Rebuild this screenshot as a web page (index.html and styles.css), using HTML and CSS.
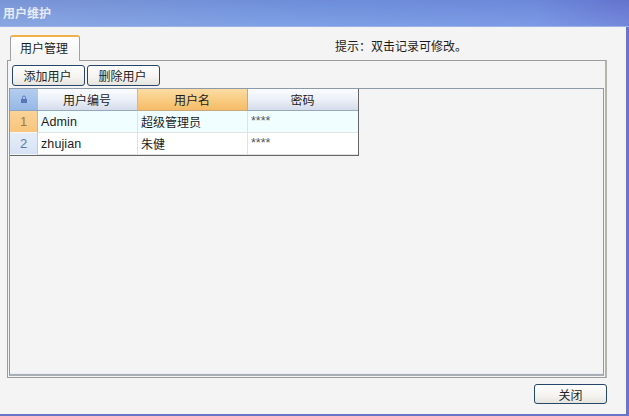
FILE: index.html
```html
<!DOCTYPE html>
<html lang="zh">
<head>
<meta charset="utf-8">
<title>用户维护</title>
<link rel="stylesheet" href="styles.css">
</head>
<body>
<div class="window">
  <div class="titlebar">用户维护</div>
  <div class="content">
    <div class="tabstrip">
      <div class="tab">用户管理</div>
      <div class="hint">提示：双击记录可修改。</div>
    </div>
    <div class="panel">
      <div class="toolbar">
        <button class="btn">添加用户</button>
        <button class="btn">删除用户</button>
      </div>
      <div class="gridbox">
        <div class="grid">
          <div class="corner">
            <svg width="8" height="9" viewBox="0 0 8 9"><path d="M2.5 4V2.5a1.5 1.5 0 0 1 3 0V4" fill="none" stroke="#5a76b8" stroke-width="1"/><rect x="1" y="4" width="6" height="4" fill="#5a76b8"/></svg>
          </div>
          <div class="head">用户编号</div>
          <div class="head sorted">用户名</div>
          <div class="head">密码</div>

          <div class="rowhead current">1</div>
          <div class="cell alt latin">Admin</div>
          <div class="cell alt">超级管理员</div>
          <div class="cell alt stars">****</div>

          <div class="rowhead">2</div>
          <div class="cell latin">zhujian</div>
          <div class="cell">朱健</div>
          <div class="cell stars">****</div>
        </div>
      </div>
    </div>
    <div class="footer">
      <button class="btn close">关闭</button>
    </div>
  </div>
</div>
</body>
</html>
```
FILE: styles.css
```css
* { box-sizing: border-box; }
html, body { margin: 0; padding: 0; }
body {
  width: 629px;
  height: 416px;
  overflow: hidden;
  background: #f4f4f4;
  font-family: "Noto Sans CJK SC", "Liberation Sans", sans-serif;
  font-size: 12px;
  color: #1c1c1c;
}
.window {
  width: 629px;
  height: 416px;
  display: flex;
  flex-direction: column;
  border-right: 3px solid #6a75c8;
  border-bottom: 2px solid #6a75c8;
  background: #f4f4f4;
}
.titlebar {
  height: 27px;
  flex: none;
  margin-right: -3px;
  padding-left: 3px;
  line-height: 26px;
  font-size: 12px;
  font-weight: 700;
  color: #e6ecf8;
  background:
    linear-gradient(rgba(60, 90, 190, .16), rgba(150, 190, 255, .22)),
    linear-gradient(90deg, #86a0da 0%, #7797de 50%, #7590de 85%, #6a78d0 100%);
  border-bottom: 1px solid #9ab2e8;
}
.content {
  flex: 1;
  display: flex;
  flex-direction: column;
  padding: 8px 19px 0 7px;
  min-height: 0;
}
.tabstrip {
  height: 26px;
  flex: none;
  display: flex;
  position: relative;
  z-index: 1;
}
.tab {
  width: 70px;
  height: 26px;
  margin-left: 3px;
  padding-right: 2px;
  text-align: center;
  line-height: 22px;
  background: linear-gradient(#fff, #f6f6f6 70%, #f4f4f4);
  border: 1px solid #a0a0a0;
  border-top: 2px solid #f2b04a;
  border-bottom: none;
  border-radius: 3px 3px 0 0;
}
.hint {
  margin-left: 255px;
  padding-top: 1px;
  line-height: 20px;
}
.panel {
  height: 318px;
  flex: none;
  margin-top: -1px;
  padding: 4px 1px 1px 1px;
  border: 1px solid #9c9c9c;
  border-right: 2px solid #b4b4ac;
  display: flex;
  flex-direction: column;
  background: #f4f4f4;
}
.toolbar {
  display: flex;
  gap: 2px;
  padding-left: 3px;
  height: 23px;
  flex: none;
}
.btn {
  width: 73px;
  height: 21px;
  padding: 0 2px 0 0;
  font: inherit;
  color: #222;
  border: 1px solid #26466a;
  border-radius: 3px;
  background: linear-gradient(#fefefe, #f4f3ef 60%, #e6e4de);
}
.gridbox {
  flex: 1;
  border: 1px solid #8c9aa8;
  border-bottom: 2px solid #a8aeb4;
  box-shadow: inset 0 -1px 0 #e8ecf8;
  min-height: 0;
}
.grid {
  width: 349px;
  display: grid;
  grid-template-columns: 28px 100px 110px 110px;
  grid-template-rows: 22px 22px 22px;
  border-right: 1px solid #666;
  border-bottom: 1px solid #666;
  height: 67px;
}
.corner {
  display: flex;
  align-items: center;
  justify-content: center;
  background: linear-gradient(#b4cdef, #96b8e6);
  border-bottom: 1px solid #8ea4c4;
}
.head {
  padding-right: 1px;
  text-align: center;
  line-height: 21px;
  background: linear-gradient(#fafcff, #eef2f9 45%, #d5dcea);
  border-right: 1px solid #b4bccc;
  border-bottom: 1px solid #98a8bc;
}
.head:nth-child(4) { border-right: none; }
.head.sorted {
  background: linear-gradient(#fcdca4, #f9cb80 55%, #f5bc68);
  border-right-color: #d8a860;
  border-bottom-color: #c8a878;
}
.rowhead {
  text-align: center;
  line-height: 21px;
  color: #5c7ba8;
  font-family: "Liberation Sans", sans-serif;
  font-size: 13px;
  background: linear-gradient(#e6edf8, #d6e2f4);
  border-bottom: 1px solid #f4f6fa;
  border-right: 1px solid #c0cce0;
}
.rowhead.current {
  color: #9a7a50;
  background: linear-gradient(#fbd298, #f8c67c);
  border-right-color: #dcb070;
}
.cell {
  padding: 1px 0 0 3px;
  line-height: 20px;
  background: #fff;
  border-right: 1px solid #dfe3e3;
  border-bottom: 1px solid #dfe3e3;
  white-space: nowrap;
  font-size: 12px;
}
.cell:nth-child(4n) { border-right: none; }
.cell.alt { background: #f0feff; }
.cell.latin {
  font-family: "Liberation Sans", sans-serif;
  font-size: 12.5px;
  letter-spacing: .1px;
}
.cell.stars {
  color: #555;
  font-family: "Liberation Sans", sans-serif;
  font-size: 12.5px;
  line-height: 19px;
}
.footer {
  flex: 1;
  display: flex;
  justify-content: flex-end;
  padding-top: 6px;
}
.close { height: 20px; padding: 0; }
```
